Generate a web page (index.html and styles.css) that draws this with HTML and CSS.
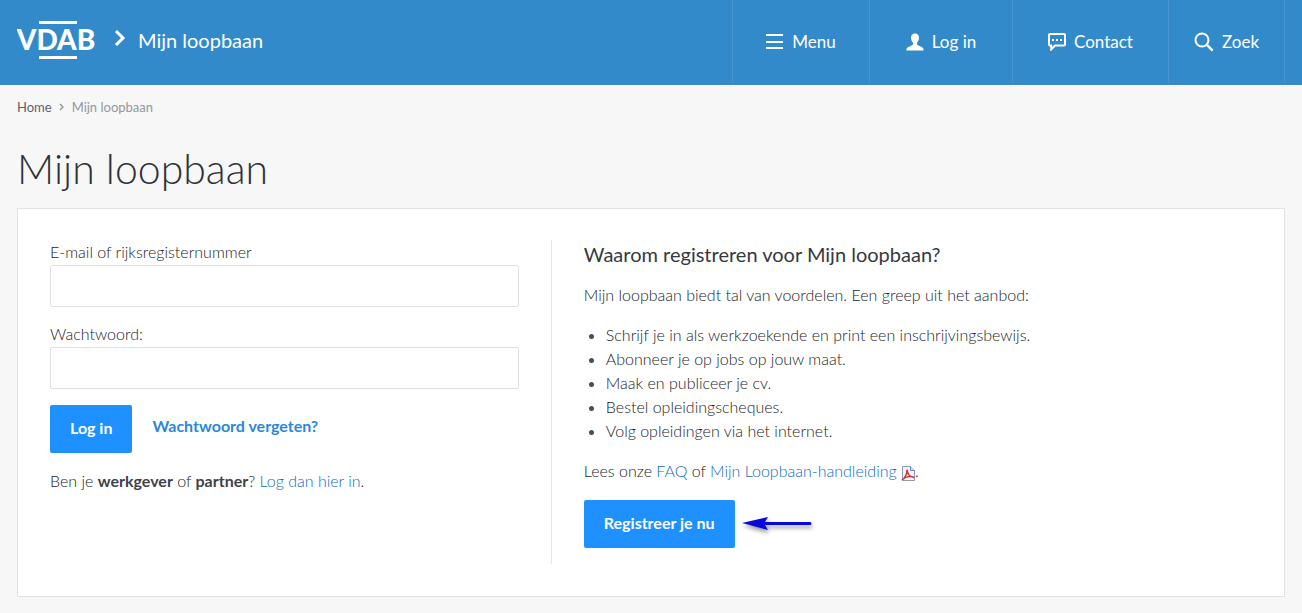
FILE: index.html
```html
<!DOCTYPE html>
<html lang="nl">
<head>
<meta charset="utf-8">
<meta name="viewport" content="width=device-width, initial-scale=1">
<title>Mijn loopbaan</title>
<link rel="stylesheet" href="styles.css">
</head>
<body>
<header class="site-header">
  <div class="brand">
    <a class="logo" href="#" aria-label="VDAB">
      <svg width="80" height="40" viewBox="0 0 80 40">
        <path d="M22 1h38v3H22zM22 36h38v3H22z" fill="#fff"/>
        <text class="logo-text" x="39" y="30" text-anchor="middle">VDAB</text>
      </svg>
    </a>
    <svg class="brand-chevron" width="12" height="18" viewBox="0 0 12 18"><path d="M2 2l7 7-7 7" fill="none" stroke="#fff" stroke-width="3"/></svg>
    <a class="brand-title" href="#">Mijn loopbaan</a>
  </div>
  <nav class="main-nav">
    <button class="nav-item" type="button">
      <svg width="18" height="18" viewBox="0 0 18 18"><path d="M0 1h17v2H0zM0 8h17v2H0zM0 14h17v2H0z" fill="#fff"/></svg>
      <span>Menu</span>
    </button>
    <a class="nav-item nav-login" href="#">
      <svg width="18" height="18" viewBox="0 0 18 18"><path d="M9 0.500c-2.600 0-4 1.800-4 4.300 0 2 .8 3.900 2 5v1.500c-.2.900-1 1.200-2.400 1.600C2 13.700.3 14.500.3 17.500h17.400c0-3-1.700-3.800-4.300-4.600-1.400-.4-2.200-.7-2.400-1.600V9.800c1.200-1.100 2-3 2-5 0-2.500-1.400-4.300-4-4.300z" fill="#fff"/></svg>
      <span>Log in</span>
    </a>
    <a class="nav-item nav-contact" href="#">
      <svg width="18" height="18" viewBox="0 0 18 18"><path d="M2 1h14a1 1 0 0 1 1 1v9.500a1 1 0 0 1-1 1H7L3.200 16.500V12.500H2a1 1 0 0 1-1-1V2a1 1 0 0 1 1-1z" fill="none" stroke="#fff" stroke-width="2"/><path d="M4 6h2v2H4zM8 6h2v2H8zM12 6h2v2h-2z" fill="#fff"/></svg>
      <span>Contact</span>
    </a>
    <button class="nav-item nav-search" type="button">
      <svg width="20" height="20" viewBox="0 0 20 20"><g fill="none" stroke="#fff" stroke-width="2"><circle cx="8" cy="8" r="6.500"/><path d="M12.700 12.700l6 6" stroke-width="2.500"/></g></svg>
      <span>Zoek</span>
    </button>
  </nav>
</header>
<main class="page">
  <nav class="breadcrumb" aria-label="Kruimelpad">
    <a href="#">Home</a>
    <svg width="6" height="8" viewBox="0 0 6 8"><path d="M1 1l3 3-3 3" fill="none" stroke="#8a8f95" stroke-width="1.300"/></svg>
    <span>Mijn loopbaan</span>
  </nav>
  <h1 class="page-title">Mijn loopbaan</h1>
  <div class="card">
    <form class="login">
      <label class="field-label" for="user">E-mail of rijksregisternummer</label>
      <input class="field" id="user" type="text">
      <label class="field-label" for="pass">Wachtwoord:</label>
      <input class="field" id="pass" type="password">
      <div class="actions">
        <button class="button" type="submit">Log in</button>
        <a class="forgot" href="#">Wachtwoord vergeten?</a>
      </div>
      <p class="text">Ben je <strong>werkgever</strong> of <strong>partner</strong>? <a href="#">Log dan hier in</a>.</p>
    </form>
    <section class="register">
      <h2 class="subtitle">Waarom registreren voor Mijn loopbaan?</h2>
      <p class="text">Mijn loopbaan biedt tal van voordelen. Een greep uit het aanbod:</p>
      <ul class="benefits">
        <li>Schrijf je in als werkzoekende en print een inschrijvingsbewijs.</li>
        <li>Abonneer je op jobs op jouw maat.</li>
        <li>Maak en publiceer je cv.</li>
        <li>Bestel opleidingscheques.</li>
        <li>Volg opleidingen via het internet.</li>
      </ul>
      <p class="text">Lees onze <a href="#">FAQ</a> of <a href="#">Mijn Loopbaan-handleiding <svg class="pdf" width="14" height="15" viewBox="0 0 14 15"><path d="M1.500.5h8l4 4v10h-12z" fill="#f2f5fb" stroke="#8c9bb8"/><path d="M9.500.5v4h4" fill="#dce4f2" stroke="#6f83a8"/><path d="M1 14c3-2 5-6 5-10.500C6.500 8 9.500 11 13 11.500 9 9.500 4 11 1 14z" fill="none" stroke="#d2323a" stroke-width="1.500"/></svg></a>.</p>
      <div class="register-action">
        <button class="button" type="button">Registreer je nu</button>
        <svg class="arrow" width="72" height="20" viewBox="0 0 72 20"><path d="M0 9L26 3l-3 5h45a1.500 1.500 0 0 1 0 3H23l3 5z" fill="#0808d8"/></svg>
      </div>
    </section>
  </div>
</main>
</body>
</html>
```
FILE: styles.css
```css
* {
  box-sizing: border-box;
}

body {
  margin: 0;
  background: #f7f7f7;
  color: #222428;
  font: 300 16px/24px Lato, "Open Sans", sans-serif;
}

a {
  color: #0f6cc0;
  text-decoration: none;
}

button {
  font: inherit;
  cursor: pointer;
}

strong {
  color: #3f4247;
  font-weight: 700;
}

.site-header {
  display: flex;
  justify-content: space-between;
  min-height: 85px;
  padding: 0 17px;
  background: #338acb;
  border-bottom: 2px solid #3d87bd;
}

.brand {
  display: flex;
  align-items: center;
  padding-bottom: 4px;
}

.logo svg {
  display: block;
}

.logo-text {
  fill: #fff;
  font-family: Lato, sans-serif;
  font-size: 28px;
  font-weight: 900;
}

.brand-chevron {
  margin: 0 12px 4px 17px;
}

.brand-title {
  color: #fff;
  font-size: 20px;
  font-weight: 400;
}

.main-nav {
  display: flex;
  border-right: 1px solid #4796d2;
}

.nav-item {
  display: flex;
  align-items: center;
  justify-content: center;
  gap: 8px;
  width: 137px;
  padding: 0;
  border: 0;
  border-left: 1px solid #4796d2;
  background: none;
  color: #fff;
  font-size: 17px;
  font-weight: 400;
}

.nav-login {
  width: 143px;
}

.nav-contact {
  width: 156px;
}

.nav-search {
  width: 116px;
}

.page {
  padding: 10px 17px 16px;
}

.breadcrumb {
  display: flex;
  align-items: center;
  gap: 7px;
  color: #93979c;
  font-size: 13px;
  font-weight: 400;
}

.breadcrumb a {
  color: #5e6268;
}

.page-title {
  margin: 25px 0 14px;
  color: #2f3236;
  font-size: 41px;
  font-weight: 300;
  line-height: 50px;
}

.card {
  display: grid;
  grid-template-columns: 5fr 7fr;
  padding: 31px 32px 32px;
  background: #fff;
  border: 1px solid #e2e2e2;
}

.login {
  padding-right: 32px;
}

.field-label {
  display: block;
  padding-bottom: 1px;
}

.field {
  display: block;
  width: 100%;
  height: 42px;
  margin-bottom: 15px;
  padding: 8px 12px;
  border: 1px solid #e0e0e0;
  border-radius: 2px;
  background: #fff;
  font: inherit;
}

.actions {
  display: flex;
  align-items: center;
  gap: 20px;
  margin: 16px 0;
}

.button {
  height: 48px;
  padding: 0 20px 2px;
  border: 0;
  border-radius: 2px;
  background: #1e90ff;
  color: #fff;
  font-weight: 700;
}

.forgot {
  padding-bottom: 6px;
  color: #2b88d9;
  font-weight: 700;
}

.text {
  margin: 0 0 16px;
}

.register {
  padding-left: 32px;
  border-left: 1px solid #e6e6e6;
}

.subtitle {
  margin: 0 0 15px;
  color: #36393e;
  font-size: 20px;
  font-weight: 400;
  line-height: 28px;
}

.benefits {
  margin: 0 0 16px;
  padding-left: 22px;
}

.benefits li::marker {
  color: #4a4d52;
}

.pdf {
  vertical-align: -4px;
}

.register-action {
  display: flex;
  align-items: center;
  gap: 7px;
  margin: 17px 0 16px;
}

.arrow {
  filter: drop-shadow(1px 3px 2px rgba(0, 0, 0, 0.4));
}
```
